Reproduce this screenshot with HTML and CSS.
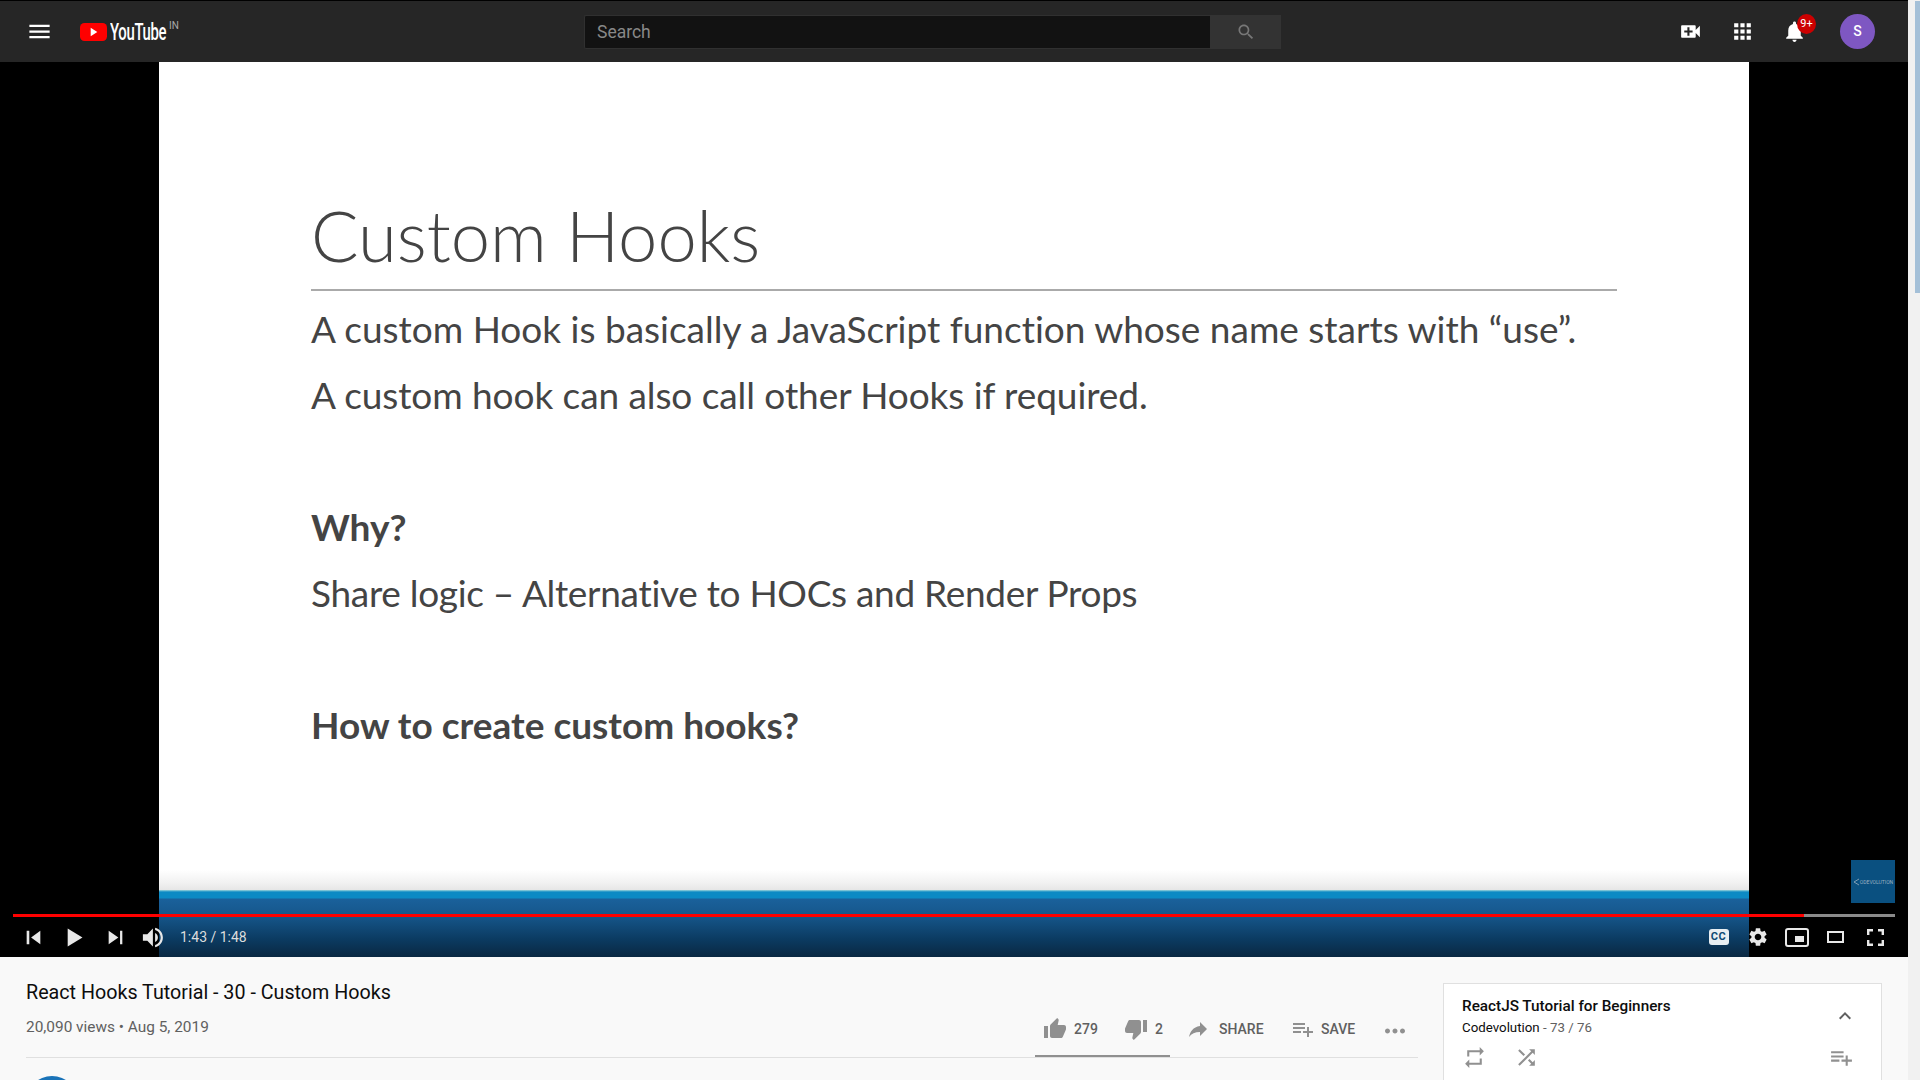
FILE: index.html
```html
<!DOCTYPE html>
<html lang="en">
<head>
  <meta charset="UTF-8">
  <title>React Hooks Tutorial - 30 - Custom Hooks - YouTube</title>
  <link rel="stylesheet" href="styles.css">
</head>
<body>
  <div class="page">
    <div class="main">

      <header class="masthead">
        <div class="mast-left">
          <svg class="menu-icon" viewBox="0 0 24 24"><path d="M3 18h18v-2H3v2zm0-5h18v-2H3v2zm0-7v2h18V6H3z"/></svg>
          <div class="logo">
            <svg class="logo-mark" viewBox="0 0 27 18"><rect width="27" height="18" rx="4.5" fill="#f00"/><path d="M10.7 4.7l6.6 4.3-6.6 4.3z" fill="#fff"/></svg>
            <span class="logo-word">YouTube</span>
            <span class="logo-country">IN</span>
          </div>
        </div>
        <div class="search">
          <div class="search-input">Search</div>
          <div class="search-btn">
            <svg viewBox="0 0 24 24"><path d="M15.5 14h-.79l-.28-.27C15.41 12.59 16 11.11 16 9.5 16 5.91 13.09 3 9.5 3S3 5.91 3 9.5 5.91 16 9.5 16c1.61 0 3.09-.59 4.23-1.57l.27.28v.79l5 4.99L20.49 19l-4.99-5zm-6 0C7.01 14 5 11.99 5 9.5S7.01 5 9.5 5 14 7.01 14 9.5 11.99 14 9.5 14z"/></svg>
          </div>
        </div>
        <div class="mast-right">
          <div class="mast-btn"><svg viewBox="0 0 24 24"><path d="M17 10.5V7c0-.55-.45-1-1-1H4c-.55 0-1 .45-1 1v10c0 .55.45 1 1 1h12c.55 0 1-.45 1-1v-3.5l4 4v-11l-4 4zM14 13h-3v3H9v-3H6v-2h3V8h2v3h3v2z"/></svg></div>
          <div class="mast-btn"><svg viewBox="0 0 24 24"><path d="M4 8h4V4H4v4zm6 12h4v-4h-4v4zm-6 0h4v-4H4v4zm0-6h4v-4H4v4zm6 0h4v-4h-4v4zm6-10v4h4V4h-4zm-6 4h4V4h-4v4zm6 6h4v-4h-4v4zm0 6h4v-4h-4v4z"/></svg></div>
          <div class="mast-btn bell">
            <svg viewBox="0 0 24 24"><path d="M12 22c1.1 0 2-.9 2-2h-4c0 1.1.89 2 2 2zm6-6v-5c0-3.07-1.64-5.64-4.5-6.32V4c0-.83-.67-1.5-1.5-1.5s-1.5.67-1.5 1.5v.68C7.63 5.36 6 7.92 6 11v5l-2 2v1h16v-1l-2-2z"/></svg>
            <span class="badge">9+</span>
          </div>
          <div class="avatar">S</div>
        </div>
      </header>

      <section class="player">
        <div class="slide">
          <div class="slide-body">
            <h1 class="slide-title">Custom Hooks</h1>
            <p class="slide-line first">A custom Hook is basically a JavaScript function whose name starts with “use”.</p>
            <p class="slide-line second">A custom hook can also call other Hooks if required.</p>
            <p class="slide-line bold why">Why?</p>
            <p class="slide-line share-logic">Share logic – Alternative to HOCs and Render Props</p>
            <p class="slide-line bold how">How to create custom hooks?</p>
          </div>
          <div class="slide-band"></div>
        </div>

        <div class="branding">
          <svg viewBox="0 0 7 8"><path d="M6 1L1 4l5 3" fill="none" stroke="currentColor" stroke-width="0.8"/></svg>
          <span>ODEVOLUTION</span>
        </div>

        <div class="chrome">
          <div class="progress"><div class="progress-played"></div></div>
          <div class="controls">
            <div class="ctrl-btn"><svg viewBox="0 0 36 36"><path d="M12 24h2.3V12H12zM15.9 18l8.1 6V12z"/></svg></div>
            <div class="ctrl-btn"><svg viewBox="0 0 36 36"><path d="M12 26V10l13 8z"/></svg></div>
            <div class="ctrl-btn"><svg viewBox="0 0 36 36"><path d="M12 24l8.5-6L12 12zM22 12v12h2V12z"/></svg></div>
            <div class="ctrl-btn volume"><svg viewBox="0 0 36 36"><path d="M8 21h4l5 5V10l-5 5H8zM19 14v8c1.48-.68 2.5-2.23 2.5-4 0-1.74-1.02-3.26-2.5-4zM19 11.29c2.89.86 5 3.54 5 6.71s-2.11 5.85-5 6.71v2.06c4.01-.91 7-4.49 7-8.77s-2.99-7.86-7-8.77z"/></svg></div>
            <span class="time">1:43 / 1:48</span>
            <div class="ctrl-right">
              <div class="ctrl-btn"><span class="cc">CC</span></div>
              <div class="ctrl-btn gear"><svg viewBox="0 0 24 24"><path d="M19.14 12.94c.04-.3.06-.61.06-.94 0-.32-.02-.64-.07-.94l2.03-1.58c.18-.14.23-.41.12-.61l-1.92-3.32c-.12-.22-.37-.29-.59-.22l-2.39.96c-.5-.38-1.03-.7-1.62-.94l-.36-2.54c-.04-.24-.24-.41-.48-.41h-3.84c-.24 0-.43.17-.47.41l-.36 2.54c-.59.24-1.13.57-1.62.94l-2.39-.96c-.22-.08-.47 0-.59.22L2.74 8.87c-.12.21-.08.47.12.61l2.03 1.58c-.05.3-.09.63-.09.94s.02.64.07.94l-2.03 1.58c-.18.14-.23.41-.12.61l1.92 3.32c.12.22.37.29.59.22l2.39-.96c.5.38 1.03.7 1.62.94l.36 2.54c.05.24.24.41.48.41h3.84c.24 0 .44-.17.47-.41l.36-2.54c.59-.24 1.13-.56 1.62-.94l2.39.96c.22.08.47 0 .59-.22l1.92-3.32c.12-.22.07-.47-.12-.61l-2.01-1.58zM12 15.6c-1.98 0-3.6-1.62-3.6-3.6s1.62-3.6 3.6-3.6 3.6 1.62 3.6 3.6-1.62 3.6-3.6 3.6z"/></svg></div>
              <div class="ctrl-btn mini"><div class="mini-box"><div class="mini-inner"></div></div></div>
              <div class="ctrl-btn"><div class="theater-box"></div></div>
              <div class="ctrl-btn full"><svg viewBox="0 0 17 17"><path d="M0 6V0h6v2.4H2.4V6zM11 0h6v6h-2.4V2.4H11zM17 11v6h-6v-2.4h3.6V11zM6 17H0v-6h2.4v3.6H6z"/></svg></div>
            </div>
          </div>
        </div>
      </section>

      <section class="below">
        <div class="primary">
          <h2 class="video-title">React Hooks Tutorial - 30 - Custom Hooks</h2>
          <div class="info-row">
            <span class="views">20,090 views • Aug 5, 2019</span>
            <div class="actions">
              <div class="sentiment">
                <div class="action like">
                  <svg viewBox="0 0 24 24"><path d="M1 21h4V9H1v12zm22-11c0-1.1-.9-2-2-2h-6.31l.95-4.57.03-.32c0-.41-.17-.79-.44-1.06L14.17 1 7.59 7.59C7.22 7.95 7 8.45 7 9v10c0 1.1.9 2 2 2h9c.83 0 1.54-.5 1.84-1.22l3.02-7.05c.09-.23.14-.47.14-.73v-2z"/></svg>
                  <span>279</span>
                </div>
                <div class="action dislike">
                  <svg viewBox="0 0 24 24"><path d="M15 3H6c-.83 0-1.54.5-1.84 1.22l-3.02 7.05c-.09.23-.14.47-.14.73v2c0 1.1.9 2 2 2h6.31l-.95 4.57-.03.32c0 .41.17.79.44 1.06L9.83 23l6.59-6.59c.36-.36.58-.86.58-1.41V5c0-1.1-.9-2-2-2zm4 0v12h4V3h-4z"/></svg>
                  <span>2</span>
                </div>
              </div>
              <div class="action share">
                <svg viewBox="0 0 24 24"><path d="M14 9V5l7 7-7 7v-4.1c-5 0-8.5 1.6-11 5.1 1-5 4-10 11-11z"/></svg>
                <span>SHARE</span>
              </div>
              <div class="action save">
                <svg viewBox="0 0 24 24"><path d="M14 10H2v2h12v-2zm0-4H2v2h12V6zm4 8v-4h-2v4h-4v2h4v4h2v-4h4v-2h-4zM2 16h8v-2H2v2z"/></svg>
                <span>SAVE</span>
              </div>
              <svg class="more" viewBox="0 0 24 24"><path d="M6 10c-1.1 0-2 .9-2 2s.9 2 2 2 2-.9 2-2-.9-2-2-2zm12 0c-1.1 0-2 .9-2 2s.9 2 2 2 2-.9 2-2-.9-2-2-2zm-6 0c-1.1 0-2 .9-2 2s.9 2 2 2 2-.9 2-2-.9-2-2-2z"/></svg>
            </div>
          </div>
          <div class="channel-avatar"></div>
        </div>

        <aside class="playlist">
          <div class="playlist-head">
            <div>
              <div class="playlist-title">ReactJS Tutorial for Beginners</div>
              <div class="playlist-sub">Codevolution <span>- 73 / 76</span></div>
            </div>
            <svg class="chevron" viewBox="0 0 24 24"><path d="M12 8l-6 6 1.41 1.41L12 10.83l4.59 4.58L18 14z"/></svg>
          </div>
          <div class="playlist-tools">
            <svg viewBox="0 0 24 24"><path d="M7 7h10v3l4-4-4-4v3H5v6h2V7zm10 10H7v-3l-4 4 4 4v-3h12v-6h-2v4z"/></svg>
            <svg viewBox="0 0 24 24"><path d="M10.59 9.17L5.41 4 4 5.41l5.17 5.17 1.42-1.41zM14.5 4l2.04 2.04L4 18.59 5.41 20 17.96 7.46 20 9.5V4h-5.5zm.33 9.41l-1.41 1.41 3.13 3.13L14.5 20H20v-5.5l-2.04 2.04-3.13-3.13z"/></svg>
            <svg class="tool-add" viewBox="0 0 24 24"><path d="M14 10H2v2h12v-2zm0-4H2v2h12V6zm4 8v-4h-2v4h-4v2h4v4h2v-4h4v-2h-4zM2 16h8v-2H2v2z"/></svg>
          </div>
        </aside>
      </section>
    </div>

    <div class="scrollbar"><div class="scrollbar-thumb"></div></div>
  </div>
</body>
</html>
```

FILE: styles.css
```css
html, body {
  margin: 0;
  height: 100%;
  overflow: hidden;
}

body {
  font-family: Roboto, Arial, sans-serif;
  background: #f9f9f9;
}

svg {
  display: block;
  fill: currentColor;
}

h1, h2, p {
  margin: 0;
  font-weight: normal;
}

.page {
  display: flex;
  height: 1080px;
}

.main {
  width: 1908px;
  flex-shrink: 0;
  overflow: hidden;
}

/* masthead */
.masthead {
  display: flex;
  align-items: center;
  height: 61px;
  border-top: 1px solid #000;
  background: #262626;
  color: #fff;
}

.mast-left {
  display: flex;
  align-items: center;
  width: 584px;
  flex-shrink: 0;
  padding-left: 26px;
  box-sizing: border-box;
}

.menu-icon {
  width: 27px;
  height: 27px;
}

.logo {
  display: flex;
  align-items: center;
  margin-left: 27px;
}

.logo-mark {
  width: 27px;
  height: 18px;
}

.logo-word {
  width: 56px;
  margin-left: 3px;
  font-size: 24px;
  font-weight: 500;
  letter-spacing: -0.5px;
  transform: scaleX(0.62);
  transform-origin: left center;
  white-space: nowrap;
}

.logo-country {
  align-self: flex-start;
  margin: 2px 0 0 3px;
  font-size: 10px;
  color: #aaa;
}

.search {
  display: flex;
  width: 697px;
  height: 34px;
  flex-shrink: 0;
}

.search-input {
  flex: 1;
  padding-left: 12px;
  background: #121212;
  border: 1px solid #303030;
  border-right: none;
  border-radius: 2px 0 0 2px;
  font-size: 17.5px;
  line-height: 32px;
  color: #888;
}

.search-btn {
  display: flex;
  align-items: center;
  justify-content: center;
  width: 71px;
  background: #333;
  color: #777;
}

.search-btn svg {
  width: 20px;
  height: 20px;
}

.mast-right {
  display: flex;
  align-items: center;
  justify-content: flex-end;
  flex: 1;
  padding-right: 33px;
}

.mast-btn {
  position: relative;
  width: 52px;
  display: flex;
  justify-content: center;
}

.mast-btn svg {
  width: 25px;
  height: 25px;
}

.badge {
  position: absolute;
  left: 29px;
  top: -5px;
  width: 19px;
  height: 20px;
  border-radius: 50%;
  background: #c00;
  font-size: 11px;
  line-height: 20px;
  text-align: center;
}

.avatar {
  width: 35px;
  height: 35px;
  margin-left: 20px;
  border-radius: 50%;
  background: #7e57c2;
  font-size: 14px;
  font-weight: 500;
  line-height: 35px;
  text-align: center;
}

/* player */
.player {
  position: relative;
  display: flex;
  justify-content: center;
  height: 895px;
  background: #000;
}

.slide {
  display: flex;
  flex-direction: column;
  width: 1590px;
  background: #fff;
}

.slide-body {
  flex: 1;
  padding: 0 132px 0 152px;
  font-family: Lato, "Open Sans", sans-serif;
  font-variant-ligatures: none;
  color: #444;
}

.slide-title {
  height: 229px;
  padding-top: 133px;
  box-sizing: border-box;
  border-bottom: 2px solid #aaa;
  font-size: 70.5px;
  font-weight: 300;
  line-height: 80px;
}

.slide-line {
  font-size: 37px;
  line-height: 66px;
  white-space: nowrap;
}

.slide-line.first {
  margin-top: 5px;
}

.slide-line.second {
  letter-spacing: -0.07px;
}

.slide-line.share-logic {
  letter-spacing: -0.3px;
}

.bold {
  font-weight: 700;
}

.why {
  margin-top: 66px;
}

.how {
  margin-top: 66px;
}

.slide-band {
  height: 87px;
  background: linear-gradient(to bottom,
    #fff 0, #f2f2f2 12px, #e6e6e6 20px, #9fd5da 20px, #0c8ac4 22px,
    #0c8ac4 28px, #1a619b 29px, #16578c 45px, #0b3a60 70px, #0a2842 87px);
}

.branding {
  position: absolute;
  left: 1851px;
  top: 798px;
  display: flex;
  align-items: center;
  justify-content: center;
  width: 44px;
  height: 43px;
  background: #0a5080;
  color: #9ab0c0;
  font-size: 5px;
  white-space: nowrap;
  overflow: hidden;
}

.branding svg {
  width: 7px;
  height: 8px;
}

.chrome {
  position: absolute;
  left: 13px;
  right: 13px;
  bottom: 0;
}

.progress {
  height: 3px;
  background: #8a8a8a;
}

.progress-played {
  width: 95.16%;
  height: 100%;
  background: #f00;
}

.controls {
  display: flex;
  align-items: center;
  height: 40px;
  color: #e8e8e8;
}

.ctrl-btn {
  display: flex;
  align-items: center;
  justify-content: center;
  width: 41px;
  height: 40px;
}

.ctrl-btn svg {
  width: 41px;
  height: 41px;
}

.ctrl-btn.volume {
  width: 40px;
  margin-left: -2px;
}

.time {
  margin-left: 6px;
  font-size: 14px;
  color: #ddd;
}

.ctrl-right {
  display: flex;
  margin-left: auto;
}

.ctrl-right .ctrl-btn {
  width: 39px;
}

.ctrl-right .ctrl-btn:last-child {
  width: 40px;
}

.cc {
  width: 20px;
  height: 16px;
  border-radius: 3px;
  background: #e8eef2;
  color: #0c4a75;
  font-size: 11px;
  font-weight: 700;
  line-height: 16px;
  letter-spacing: 0.5px;
  text-align: center;
}

.ctrl-btn.gear svg {
  width: 22px;
  height: 22px;
}

.mini-box {
  display: flex;
  align-items: flex-end;
  justify-content: flex-end;
  width: 24px;
  height: 19px;
  padding: 0 3px 3px 0;
  box-sizing: border-box;
  border: 2px solid #e8e8e8;
  border-radius: 3px;
}

.mini-inner {
  width: 9px;
  height: 6px;
  background: #e8e8e8;
}

.theater-box {
  width: 17px;
  height: 12px;
  box-sizing: border-box;
  border: 2px solid #e8e8e8;
}

.ctrl-btn.full svg {
  width: 17px;
  height: 17px;
}

/* below the player */
.below {
  display: flex;
  height: 123px;
  padding-left: 26px;
}

.primary {
  position: relative;
  width: 1392px;
  flex-shrink: 0;
}

.video-title {
  margin-top: 24px;
  font-size: 19.7px;
  line-height: 24px;
  color: #0d0d0d;
}

.info-row {
  display: flex;
  justify-content: space-between;
  height: 40px;
  margin-top: 12px;
  border-bottom: 1px solid #e0e0e0;
}

.views {
  font-size: 15.4px;
  line-height: 20px;
  color: #606060;
}

.actions {
  display: flex;
  align-items: flex-start;
  margin-right: 8px;
  color: #606060;
  font-size: 14px;
  font-weight: 500;
}

.sentiment {
  display: flex;
  width: 135px;
  height: 40px;
  padding-left: 8px;
  box-sizing: border-box;
  border-bottom: 2px solid #909090;
}

.action {
  display: flex;
  align-items: center;
  height: 22px;
  margin-top: 1px;
}

.action svg {
  width: 24px;
  height: 24px;
  color: #909090;
}

.action span {
  margin-left: 9px;
}

.like span,
.dislike span {
  margin-left: 7px;
}

.like {
  width: 81px;
}

.share {
  width: 105px;
  margin-left: 16px;
}

.save {
  width: 89px;
}

.save span {
  margin-left: 6px;
}

.more {
  width: 30px;
  height: 30px;
  margin-top: -1px;
  color: #909090;
}

.channel-avatar {
  position: absolute;
  left: 0;
  top: 119px;
  width: 52px;
  height: 52px;
  border-radius: 50%;
  background: #1a73b8;
}

.playlist {
  width: 439px;
  height: 120px;
  margin: 26px 0 0 25px;
  padding: 12px 18px 0;
  box-sizing: border-box;
  background: #fff;
  border: 1px solid #e0e0e0;
  flex-shrink: 0;
}

.playlist-head {
  display: flex;
  justify-content: space-between;
  align-items: center;
}

.playlist-title {
  font-size: 15.3px;
  font-weight: 500;
  line-height: 20px;
  color: #0d0d0d;
}

.playlist-sub {
  margin-top: 3px;
  font-size: 13.3px;
  line-height: 18px;
  color: #0d0d0d;
}

.playlist-sub span {
  color: #606060;
}

.chevron {
  width: 24px;
  height: 24px;
  margin: -2px 6px 0 0;
  color: #606060;
}

.playlist-tools {
  display: flex;
  gap: 27px;
  margin-top: 8px;
  color: #909090;
}

.playlist-tools svg {
  width: 25px;
  height: 25px;
}

.tool-add {
  margin-left: auto;
  margin-right: 9px;
}

/* scrollbar */
.scrollbar {
  display: flex;
  justify-content: flex-end;
  width: 12px;
  background: #f1f1f1;
}

.scrollbar-thumb {
  width: 5px;
  height: 292px;
  margin-top: 1px;
  background: #a4c0d8;
}
```
